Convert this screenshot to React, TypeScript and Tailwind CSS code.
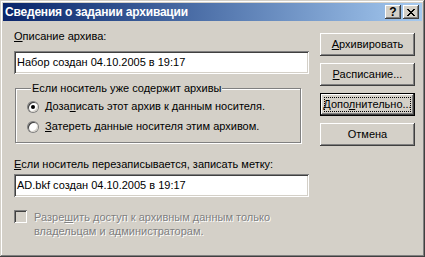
import React from 'react';

const raised =
  'shadow-[inset_-1px_-1px_0_#404040,inset_1px_1px_0_#ffffff,inset_-2px_-2px_0_#808080,inset_2px_2px_0_#d4d0c8]';
const sunken =
  'shadow-[inset_1px_1px_0_#808080,inset_-1px_-1px_0_#ffffff,inset_2px_2px_0_#404040,inset_-2px_-2px_0_#d4d0c8]';

function Btn({ children, isDefault }: { children: React.ReactNode; isDefault?: boolean }) {
  if (isDefault) {
    return (
      <div className="relative w-[95px] h-[23px] border border-black bg-[#d4d0c8]">
        <div className={`w-full h-full flex items-center justify-center ${raised}`}>{children}</div>
        <span className="absolute inset-[3px] border border-dotted border-black" />
      </div>
    );
  }
  return (
    <div className={`w-[95px] h-[23px] flex items-center justify-center bg-[#d4d0c8] ${raised}`}>
      {children}
    </div>
  );
}

function Radio({ checked, children }: { checked?: boolean; children: React.ReactNode }) {
  return (
    <div className="flex items-center h-[13px] gap-[6px]">
      <div className="w-[12px] h-[12px] rounded-full bg-[#808080] p-[1px]">
        <div className="w-full h-full rounded-full bg-white flex items-center justify-center shadow-[inset_1px_1px_0_#404040,inset_-1px_-1px_0_#d4d0c8]">
          {checked && <div className="w-[4px] h-[4px] rounded-full bg-black" />}
        </div>
      </div>
      <span>{children}</span>
    </div>
  );
}

export default function App() {
  return (
    <div
      className="w-[425px] h-[257px] bg-[#d4d0c8] p-[3px] flex flex-col text-[11px] leading-[13px] text-black shadow-[inset_-1px_-1px_0_#404040,inset_1px_1px_0_#d4d0c8,inset_-2px_-2px_0_#808080,inset_2px_2px_0_#ffffff]"
      style={{ fontFamily: '"Liberation Sans", Arial, sans-serif' }}
    >
      {/* title bar */}
      <div className="h-[18px] flex items-center justify-between pl-[2px] pr-[3px] bg-gradient-to-r from-[#0a246a] to-[#a6caf0]">
        <span className="text-white font-bold text-[12px] leading-[16px] tracking-[-0.2px]">Сведения о задании архивации</span>
        <div className="flex gap-[2px]">
          <div className={`w-[16px] h-[14px] bg-[#d4d0c8] flex items-center justify-center font-bold text-[12px] leading-none ${raised}`}>
            ?
          </div>
          <div className={`w-[16px] h-[14px] bg-[#d4d0c8] flex items-center justify-center ${raised}`}>
            <svg width="8" height="7" viewBox="0 0 8 7" shapeRendering="crispEdges">
              <path d="M0 0h2v1h-2zM6 0h2v1h-2zM1 1h2v1h-2zM5 1h2v1h-2zM2 2h4v1h-4zM3 3h2v1h-2zM2 4h4v1h-4zM1 5h2v1h-2zM5 5h2v1h-2zM0 6h2v1h-2zM6 6h2v1h-2z" fill="#000" />
            </svg>
          </div>
        </div>
      </div>

      {/* body */}
      <div className="flex justify-between pl-[11px] pr-[7px]">
        <div className="w-[295px] flex flex-col">
          <div className="mt-[9px]">
            <u>О</u>писание архива:
          </div>
          <div className={`mt-[8px] h-[23px] bg-white flex items-center pl-[3px] ${sunken}`}>
            Набор создан 04.10.2005 в 19:17
          </div>

          <fieldset className="mt-[8px] ml-[1px] w-[286px] border border-[#808080] pl-[11px] pr-[4px] pt-[5px] pb-[9px] flex flex-col gap-[7px] shadow-[1px_1px_0_#ffffff,inset_1px_1px_0_#ffffff]">
            <legend className="ml-[4px] px-[1px] bg-[#d4d0c8]">Если носитель уже содержит архивы</legend>
            <Radio checked>
              Доза<u>п</u>исать этот архив к данным носителя.
            </Radio>
            <Radio>
              <u>З</u>атереть данные носителя этим архивом.
            </Radio>
          </fieldset>

          <div className="mt-[15px]">
            <u>Е</u>сли носитель перезаписывается, записать метку:
          </div>
          <div className={`mt-[3px] h-[23px] bg-white flex items-center pl-[3px] ${sunken}`}>
            AD.bkf создан 04.10.2005 в 19:17
          </div>

          <div className="mt-[13px] flex items-start gap-[7px]">
            <div className={`w-[13px] h-[13px] shrink-0 bg-[#d4d0c8] ${sunken}`} />
            <div className="leading-[14px] text-[#808080] [text-shadow:1px_1px_0_#ffffff]">
              Разре<u>ш</u>ить доступ к архивным данным только
              <br />
              владельцам и администраторам.
            </div>
          </div>
        </div>

        <div className="mt-[12px] flex flex-col gap-[7px]">
          <Btn>
            <span>
              <u>А</u>рхивировать
            </span>
          </Btn>
          <Btn>
            <span>
              <u>Р</u>асписание...
            </span>
          </Btn>
          <Btn isDefault>
            <span>
              Допо<u>л</u>нительно...
            </span>
          </Btn>
          <Btn>
            <span>Отмена</span>
          </Btn>
        </div>
      </div>
    </div>
  );
}
